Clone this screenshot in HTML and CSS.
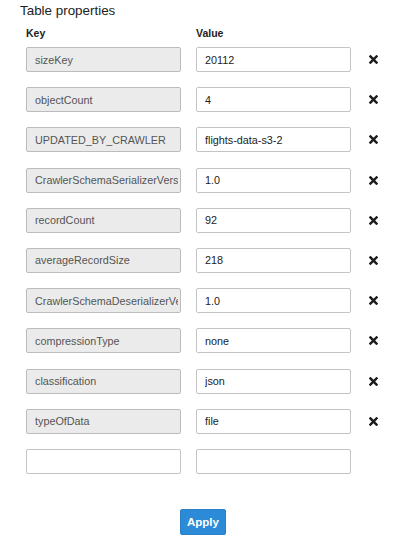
FILE: index.html
```html
<!DOCTYPE html>
<html>
<head>
<meta charset="utf-8">
<link rel="stylesheet" href="styles.css">
</head>
<body>
<div class="panel">
  <h1 class="title">Table properties</h1>
  <div class="grid">
    <div class="head">Key</div>
    <div class="head">Value</div>
    <div></div>

    <input class="key" readonly value="sizeKey">
    <input class="val" value="20112">
    <span class="del"><svg viewBox="0 0 10 10"><path d="M1.6 1.6L8.4 8.4M8.4 1.6L1.6 8.4"/></svg></span>

    <input class="key" readonly value="objectCount">
    <input class="val" value="4">
    <span class="del"><svg viewBox="0 0 10 10"><path d="M1.6 1.6L8.4 8.4M8.4 1.6L1.6 8.4"/></svg></span>

    <input class="key" readonly value="UPDATED_BY_CRAWLER">
    <input class="val" value="flights-data-s3-2">
    <span class="del"><svg viewBox="0 0 10 10"><path d="M1.6 1.6L8.4 8.4M8.4 1.6L1.6 8.4"/></svg></span>

    <input class="key" readonly value="CrawlerSchemaSerializerVersion">
    <input class="val" value="1.0">
    <span class="del"><svg viewBox="0 0 10 10"><path d="M1.6 1.6L8.4 8.4M8.4 1.6L1.6 8.4"/></svg></span>

    <input class="key" readonly value="recordCount">
    <input class="val" value="92">
    <span class="del"><svg viewBox="0 0 10 10"><path d="M1.6 1.6L8.4 8.4M8.4 1.6L1.6 8.4"/></svg></span>

    <input class="key" readonly value="averageRecordSize">
    <input class="val" value="218">
    <span class="del"><svg viewBox="0 0 10 10"><path d="M1.6 1.6L8.4 8.4M8.4 1.6L1.6 8.4"/></svg></span>

    <input class="key" readonly value="CrawlerSchemaDeserializerVersion">
    <input class="val" value="1.0">
    <span class="del"><svg viewBox="0 0 10 10"><path d="M1.6 1.6L8.4 8.4M8.4 1.6L1.6 8.4"/></svg></span>

    <input class="key" readonly value="compressionType">
    <input class="val" value="none">
    <span class="del"><svg viewBox="0 0 10 10"><path d="M1.6 1.6L8.4 8.4M8.4 1.6L1.6 8.4"/></svg></span>

    <input class="key" readonly value="classification">
    <input class="val" value="json">
    <span class="del"><svg viewBox="0 0 10 10"><path d="M1.6 1.6L8.4 8.4M8.4 1.6L1.6 8.4"/></svg></span>

    <input class="key" readonly value="typeOfData">
    <input class="val" value="file">
    <span class="del"><svg viewBox="0 0 10 10"><path d="M1.6 1.6L8.4 8.4M8.4 1.6L1.6 8.4"/></svg></span>

    <input class="val" value="">
    <input class="val" value="">
    <span></span>
  </div>
  <div class="footer">
    <button class="apply">Apply</button>
  </div>
</div>
</body>
</html>
```

FILE: styles.css
```css
html, body {
  margin: 0;
  padding: 0;
  background: #ffffff;
}
body {
  font-family: "Liberation Sans", Arial, Helvetica, sans-serif;
  color: #222;
}
.panel {
  width: 400px;
  height: 541px;
  padding-top: 3px;
  box-sizing: border-box;
}
.title {
  margin: 0 0 0 20px;
  font-size: 13.4px;
  line-height: 16px;
  font-weight: normal;
  color: #222;
  height: 24px;
}
.grid {
  display: grid;
  grid-template-columns: 155px 155px 15px;
  column-gap: 15px;
  row-gap: 15.2px;
  padding-left: 26px;
  align-items: center;
}
.head {
  font-size: 10.5px;
  font-weight: bold;
  line-height: 13px;
  color: #222;
  align-self: start;
  margin-bottom: -8.2px;
}
input {
  box-sizing: border-box;
  width: 155px;
  height: 25px;
  margin: 0;
  padding: 0 2px 0 8px;
  font-family: "Liberation Sans", Arial, Helvetica, sans-serif;
  font-size: 10.8px;
  border-radius: 2px;
  outline: none;
}
.key {
  background: #ebebeb;
  border: 1px solid #bcbcbc;
  color: #555;
}
.val {
  background: #ffffff;
  border: 1px solid #c4c4c4;
  color: #222;
}
.del {
  display: flex;
  justify-content: center;
  align-items: center;
  height: 25px;
}
.del svg {
  width: 9px;
  height: 9px;
  display: block;
}
.del path {
  stroke: #1c1c1c;
  stroke-width: 2.7;
  stroke-linecap: square;
  fill: none;
}
.footer {
  display: flex;
  justify-content: center;
  padding-left: 6px;
  margin-top: 35px;
}
.apply {
  width: 46px;
  height: 26px;
  margin: 0;
  padding: 0;
  border: 1px solid #2a7fc6;
  border-radius: 2px;
  background: #2b8bd7;
  color: #ffffff;
  font-family: "Liberation Sans", Arial, Helvetica, sans-serif;
  font-size: 11.5px;
  font-weight: bold;
}
```
